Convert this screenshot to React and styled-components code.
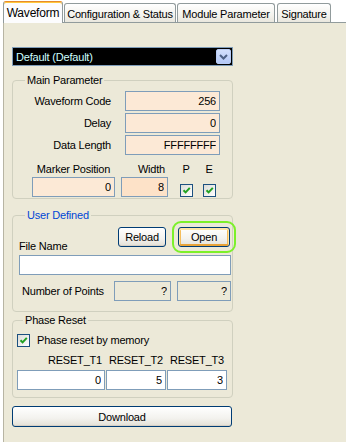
import React from "react";
import styled, { createGlobalStyle } from "styled-components";

const GlobalStyle = createGlobalStyle`
	html, body {
		margin: 0;
		padding: 0;
		background: #fff;
	}
	body {
		font-family: "Liberation Sans", Arial, sans-serif;
		font-size: 11px;
		letter-spacing: -0.2px;
		color: #000;
	}
`;

const CheckMark = () => (
	<svg width="11" height="11" viewBox="0 0 11 11">
		<path d="M2.5 5.2 L4.6 7.4 L8.8 2.8" fill="none" stroke="#21A121" strokeWidth="2" />
	</svg>
);

const App = () => {
	return (
		<Window>
			<GlobalStyle />
			<TabStrip>
				<Tab $active $w={60}>Waveform</Tab>
				<Tab $w={112} $ml={1}>Configuration &amp; Status</Tab>
				<Tab $w={98} $ml={1}>Module Parameter</Tab>
				<Tab $w={54} $ml={2}>Signature</Tab>
			</TabStrip>

			<Page>
				<Combo>
					<ComboText>Default (Default)</ComboText>
					<ComboButton>
						<svg width="9" height="6" viewBox="0 0 9 6">
							<path d="M1 1 L4.5 4.5 L8 1" fill="none" stroke="#4D6185" strokeWidth="2" />
						</svg>
					</ComboButton>
				</Combo>

				<Group $mt={8} $pad="4px 2px 1px 6px">
					<Legend>Main Parameter</Legend>
					<ParamRow>
						<ParamLabel>Waveform Code</ParamLabel>
						<Field $bg="#FCE9D6" $w={95} readOnly value="256" />
					</ParamRow>
					<ParamRow>
						<ParamLabel>Delay</ParamLabel>
						<Field $bg="#FCE9D6" $w={95} readOnly value="0" />
					</ParamRow>
					<ParamRow>
						<ParamLabel>Data Length</ParamLabel>
						<Field $bg="#FCE9D6" $w={95} readOnly value="FFFFFFFF" />
					</ParamRow>

					<MarkerRow>
						<MarkerCell $w={83} $ml={13}>
							<CellLabel>Marker Position</CellLabel>
							<CellControl>
								<Field $bg="#FCE9D6" $w={83} readOnly value="0" />
							</CellControl>
						</MarkerCell>
						<MarkerCell $w={47} $ml={6}>
							<CellLabel $align="right">Width</CellLabel>
							<CellControl>
								<Field $bg="#FDE2C8" $w={47} readOnly value="8" />
							</CellControl>
						</MarkerCell>
						<MarkerCell $w={20} $ml={8}>
							<CellLabel>P</CellLabel>
							<CellControl>
								<Check><CheckMark /></Check>
							</CellControl>
						</MarkerCell>
						<MarkerCell $w={20} $ml={3}>
							<CellLabel>E</CellLabel>
							<CellControl>
								<Check><CheckMark /></Check>
							</CellControl>
						</MarkerCell>
					</MarkerRow>
				</Group>

				<Group $mt={10} $pad="5px 1px 10px 6px">
					<Legend $blue>User Defined</Legend>
					<ButtonRow>
						<FileLabel>File Name</FileLabel>
						<Button $w={48}>Reload</Button>
						<Button $w={52} $hot>Open</Button>
					</ButtonRow>
					<Field $bg="#fff" $w={212} $mt={8} readOnly value="" />
					<PointsRow>
						<PointsLabel>Number of Points</PointsLabel>
						<Field $bg="#ECE9D8" $w={57} readOnly value="?" />
						<Field $bg="#ECE9D8" $w={54} readOnly value="?" />
					</PointsRow>
				</Group>

				<Group $mt={2} $pad="0 2px 7px 4px">
					<Legend>Phase Reset</Legend>
					<CheckRow>
						<Check><CheckMark /></Check>
						<span>Phase reset by memory</span>
					</CheckRow>
					<ResetGrid>
						<ResetLabel>RESET_T1</ResetLabel>
						<ResetLabel>RESET_T2</ResetLabel>
						<ResetLabel>RESET_T3</ResetLabel>
						<Field $bg="#fff" readOnly value="0" />
						<Field $bg="#fff" readOnly value="5" />
						<Field $bg="#fff" readOnly value="3" />
					</ResetGrid>
				</Group>

				<Button $w={220} $h={21} $mt={8}>Download</Button>
			</Page>
		</Window>
	);
};

const Window = styled.div`
	width: 346px;
	height: 442px;
	display: flex;
	flex-direction: column;
	background: #fff;
	overflow: hidden;
`;

const TabStrip = styled.div`
	display: flex;
	align-items: flex-end;
	height: 22px;
	padding-left: 3px;
`;

const Tab = styled.div`
	position: relative;
	z-index: ${(p) => (p.$active ? 2 : 1)};
	box-sizing: border-box;
	width: ${(p) => p.$w}px;
	height: ${(p) => (p.$active ? 22 : 19)}px;
	margin-left: ${(p) => p.$ml || 0}px;
	margin-bottom: ${(p) => (p.$active ? -1 : 0)}px;
	display: flex;
	align-items: center;
	justify-content: center;
	padding-top: ${(p) => (p.$active ? 0 : 1)}px;
	border: 1px solid #919B9C;
	border-bottom: none;
	border-top-color: ${(p) => (p.$active ? "#E68B2C" : "#919B9C")};
	border-radius: 3px 3px 0 0;
	background: ${(p) =>
		p.$active ? "#FCFCFE" : "linear-gradient(#FFFFFF, #F4F3EE 60%, #E9E7DE)"};
	box-shadow: ${(p) => (p.$active ? "inset 0 1px 0 #FFC83C" : "none")};
	white-space: nowrap;
	font-size: ${(p) => (p.$active ? 12 : 11)}px;
`;

const Page = styled.div`
	flex: 1;
	display: flex;
	flex-direction: column;
	align-items: flex-start;
	margin-left: 3px;
	padding-left: 8px;
	background: #ECE9D8;
	border-top: 1px solid #919B9C;
	border-left: 1px solid #B7B4A3;
`;

const Combo = styled.div`
	box-sizing: border-box;
	width: 221px;
	height: 19px;
	margin-top: 24px;
	display: flex;
	align-items: stretch;
	background: #000;
	border: 1px solid #7F9DB9;
	padding: 1px;
`;

const ComboText = styled.div`
	flex: 1;
	display: flex;
	align-items: center;
	padding-left: 2px;
	color: #CFFFFF;
	font-size: 11px;
`;

const ComboButton = styled.div`
	width: 15px;
	display: flex;
	align-items: center;
	justify-content: center;
	background: linear-gradient(#D3E0FD, #B4C8F6);
	border: 1px solid #B9CCF5;
	border-radius: 2px;
	box-sizing: border-box;
`;

const Group = styled.fieldset`
	box-sizing: border-box;
	width: 221px;
	margin: ${(p) => p.$mt}px 0 0 0;
	padding: ${(p) => p.$pad};
	border: 1px solid #D0D0BF;
	border-radius: 4px;
	display: flex;
	flex-direction: column;
	min-width: 0;
`;

const Legend = styled.legend`
	padding: 0 2px;
	margin-left: 6px;
	line-height: 13px;
	font-size: 11px;
	color: ${(p) => (p.$blue ? "#0046D5" : "#000")};
`;

const ParamRow = styled.div`
	display: flex;
	align-items: center;
	gap: 14px;
	margin-bottom: 2px;
`;

const ParamLabel = styled.div`
	width: 92px;
	text-align: right;
`;

const Field = styled.input`
	box-sizing: border-box;
	width: ${(p) => (p.$w ? `${p.$w}px` : "100%")};
	height: 20px;
	margin: ${(p) => p.$mt || 0}px 0 0 0;
	padding: 0 3px;
	border: 1px solid #7F9DB9;
	background: ${(p) => p.$bg};
	font-family: inherit;
	font-size: 11px;
	letter-spacing: -0.2px;
	color: #000;
	text-align: right;
	outline: none;
`;

const MarkerRow = styled.div`
	display: flex;
	margin-top: 6px;
`;

const MarkerCell = styled.div`
	width: ${(p) => p.$w}px;
	margin-left: ${(p) => p.$ml}px;
	display: flex;
	flex-direction: column;
	gap: 1px;
`;

const CellLabel = styled.div`
	line-height: 13px;
	text-align: ${(p) => p.$align || "center"};
	padding-right: ${(p) => (p.$align === "right" ? 3 : 0)}px;
	white-space: nowrap;
`;

const CellControl = styled.div`
	height: 20px;
	display: flex;
	align-items: flex-end;
	justify-content: center;
`;

const Check = styled.div`
	box-sizing: border-box;
	width: 13px;
	height: 13px;
	flex-shrink: 0;
	border: 1px solid #1C5180;
	background: linear-gradient(135deg, #DCDCD7, #FFFFFF);
	display: flex;
	align-items: center;
	justify-content: center;
`;

const ButtonRow = styled.div`
	display: flex;
	align-items: flex-end;
	gap: 12px;
	padding-right: 1px;
`;

const FileLabel = styled.div`
	flex: 1;
	line-height: 13px;
	margin-bottom: -6px;
`;

const Button = styled.button`
	box-sizing: border-box;
	width: ${(p) => p.$w}px;
	height: ${(p) => p.$h || 20}px;
	margin-top: ${(p) => p.$mt || 0}px;
	padding: 0;
	border: 1px solid #003C74;
	border-radius: 3px;
	background: linear-gradient(#FFFFFF, #F3F2EE 60%, #E3E0D6);
	font-family: inherit;
	font-size: 11px;
	letter-spacing: -0.2px;
	color: #000;
	box-shadow: ${(p) =>
		p.$hot
			? "inset 0 1px 0 1px #FFE4A6, inset 0 -2px 0 #E9A338, inset 2px 0 0 #F5BD5C, inset -2px 0 0 #F5BD5C"
			: "inset 0 -1px 0 #D6D0C5"};
	outline: ${(p) => (p.$hot ? "2px solid #7CF02A" : "none")};
	outline-offset: 4px;
`;

const PointsRow = styled.div`
	display: flex;
	align-items: center;
	gap: 6px;
	margin-top: 6px;
`;

const PointsLabel = styled.div`
	flex: 1;
	padding-left: 3px;
`;

const CheckRow = styled.div`
	display: flex;
	align-items: center;
	gap: 7px;
	margin-top: 7px;
	line-height: 13px;
`;

const ResetGrid = styled.div`
	display: grid;
	grid-template-columns: 88px 60px 60px;
	column-gap: 1px;
	row-gap: 3px;
	margin-top: 7px;
`;

const ResetLabel = styled.div`
	line-height: 13px;
	text-align: right;
	padding-right: 3px;
`;

export default App;
